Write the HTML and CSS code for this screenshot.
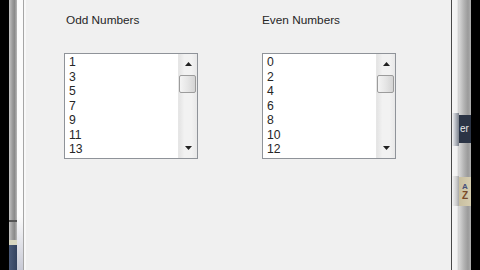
FILE: index.html
```html
<!DOCTYPE html>
<html>
<head>
<meta charset="utf-8">
<link rel="stylesheet" href="styles.css">
</head>
<body>
<div class="left">
  <div class="blk"></div>
  <div class="edge">
    <div class="edge-top"></div>
    <div class="edge-line"></div>
    <div class="edge-mid"></div>
    <div class="edge-tan"></div>
    <div class="edge-navy"></div>
  </div>
  <div class="hl"></div>
  <div class="ln"></div>
  <div class="hl2"></div>
</div>
<div class="form">
  <div class="cols">
    <div class="group">
      <div class="label odd">Odd Numbers</div>
      <div class="listbox">
        <div class="items">
          <div>1</div><div>3</div><div>5</div><div>7</div><div>9</div><div>11</div><div>13</div>
        </div>
        <div class="sb">
          <div class="btn"><svg width="7" height="4" viewBox="0 0 7 4"><polygon points="3.5,0 7,4 0,4" fill="#222"/></svg></div>
          <div class="thumb"></div>
          <div class="track"></div>
          <div class="btn"><svg width="7" height="4" viewBox="0 0 7 4"><polygon points="0,0 7,0 3.5,4" fill="#222"/></svg></div>
        </div>
      </div>
    </div>
    <div class="group">
      <div class="label even">Even Numbers</div>
      <div class="listbox">
        <div class="items">
          <div>0</div><div>2</div><div>4</div><div>6</div><div>8</div><div>10</div><div>12</div>
        </div>
        <div class="sb">
          <div class="btn"><svg width="7" height="4" viewBox="0 0 7 4"><polygon points="3.5,0 7,4 0,4" fill="#222"/></svg></div>
          <div class="thumb"></div>
          <div class="track"></div>
          <div class="btn"><svg width="7" height="4" viewBox="0 0 7 4"><polygon points="0,0 7,0 3.5,4" fill="#222"/></svg></div>
        </div>
      </div>
    </div>
  </div>
</div>
<div class="right">
  <div class="dk"></div>
  <div class="lt">
    <div class="lt-sp1"></div>
    <div class="lt-shade"></div>
    <div class="lt-sp2"></div>
    <div class="lt-shade2"></div>
  </div>
  <div class="bar">
    <div class="bar-sp1"></div>
    <div class="navy">er</div>
    <div class="bar-sp2"></div>
    <div class="az"><span class="a">A</span><span class="z">Z</span></div>
  </div>
  <div class="blk"></div>
</div>
</body>
</html>
```
FILE: styles.css
```css
html, body {
  margin: 0;
  padding: 0;
}
body {
  width: 480px;
  height: 270px;
  overflow: hidden;
  display: flex;
  background: #f0f0f0;
  font-family: "Liberation Sans", Arial, sans-serif;
}
.left, .right {
  display: flex;
  height: 270px;
}
.blk {
  width: 9px;
  background: #000;
}
.edge {
  width: 8px;
  display: flex;
  flex-direction: column;
}
.edge-top {
  height: 220px;
  background: linear-gradient(90deg, #c4c4c4, #9a9a9a 45%, #8a8a8a 70%, #b8b8b8);
}
.edge-line {
  height: 2px;
  background: #555;
}
.edge-mid {
  height: 18px;
  background: linear-gradient(90deg, #c4c4c4, #9a9a9a 45%, #8a8a8a 70%, #b8b8b8);
}
.edge-tan {
  height: 5px;
  background: #d8d6c0;
}
.edge-navy {
  flex: 1;
  background: linear-gradient(90deg, #4a5a78, #33425e);
}
.hl {
  width: 6px;
  background: linear-gradient(180deg, #fbfbfb 0, #fbfbfb 80%, #c8cad6 100%);
}
.ln {
  width: 1px;
  background: #a6a6a6;
}
.hl2 {
  width: 2px;
  background: #f8f8f8;
}
.form {
  flex: 1;
  background: #f0f0f0;
  padding: 13px 0 0 38px;
}
.cols {
  display: grid;
  grid-template-columns: 134px 134px;
  column-gap: 64px;
}
.label {
  font-size: 11.8px;
  line-height: 14px;
  color: #262626;
  height: 14px;
}
.odd {
  padding-left: 2px;
}
.listbox {
  margin-top: 26px;
  box-sizing: border-box;
  width: 134px;
  height: 106px;
  border: 1px solid #8f9399;
  background: #fff;
  display: flex;
}
.items {
  flex: 1;
  overflow: hidden;
  padding: 1px 0 0 4px;
  font-size: 12.2px;
  line-height: 14.5px;
  color: #262626;
}
.sb {
  width: 19px;
  display: flex;
  flex-direction: column;
  background: linear-gradient(90deg, #e4e4e4, #f2f2f2 30%, #f2f2f2 70%, #e8e8e8);
  border-left: 1px solid #e6e6e6;
  box-sizing: border-box;
}
.btn {
  height: 20px;
  display: flex;
  align-items: center;
  justify-content: center;
}
.thumb {
  height: 18px;
  margin: 1px 1px 0 0;
  box-sizing: border-box;
  border: 1px solid #9c9c9c;
  border-radius: 2px;
  background: linear-gradient(90deg, #f4f4f4, #e6e6e6 50%, #d4d4d4);
}
.track {
  flex: 1;
}
.dk {
  width: 1px;
  background: #4a4a4a;
}
.lt {
  width: 7px;
  display: flex;
  flex-direction: column;
  background: linear-gradient(90deg, #f6f6f6, #f2f2f2 70%, #c8c8c8);
}
.lt-sp1 {
  height: 113px;
}
.lt-shade {
  height: 33px;
  background: linear-gradient(90deg, #f4f4f4, #b8bcc4 50%, #7a808a);
}
.lt-sp2 {
  height: 30px;
}
.lt-shade2 {
  height: 30px;
  background: linear-gradient(90deg, #f4f4f4, #d0d0d0 60%, #a8a8a8);
}
.bar {
  width: 12px;
  display: flex;
  flex-direction: column;
  background: linear-gradient(90deg, #d8d8d8, #b4b4b4 40%, #9a9a9a 75%, #b0b0b0);
}
.bar-sp1 {
  height: 115px;
}
.navy {
  height: 28px;
  background: #2b3445;
  color: #e8e8e8;
  font-size: 10px;
  line-height: 28px;
  padding-left: 1px;
  overflow: hidden;
  white-space: nowrap;
}
.bar-sp2 {
  height: 34px;
}
.az {
  height: 29px;
  background: linear-gradient(90deg, #c8bfa0, #d6cdb0);
  display: flex;
  flex-direction: column;
  align-items: center;
  justify-content: center;
  font-size: 8px;
  line-height: 8px;
  font-weight: bold;
}
.a {
  color: #46507a;
}
.z {
  color: #7a4a2a;
  font-size: 10px;
  line-height: 10px;
}
```
